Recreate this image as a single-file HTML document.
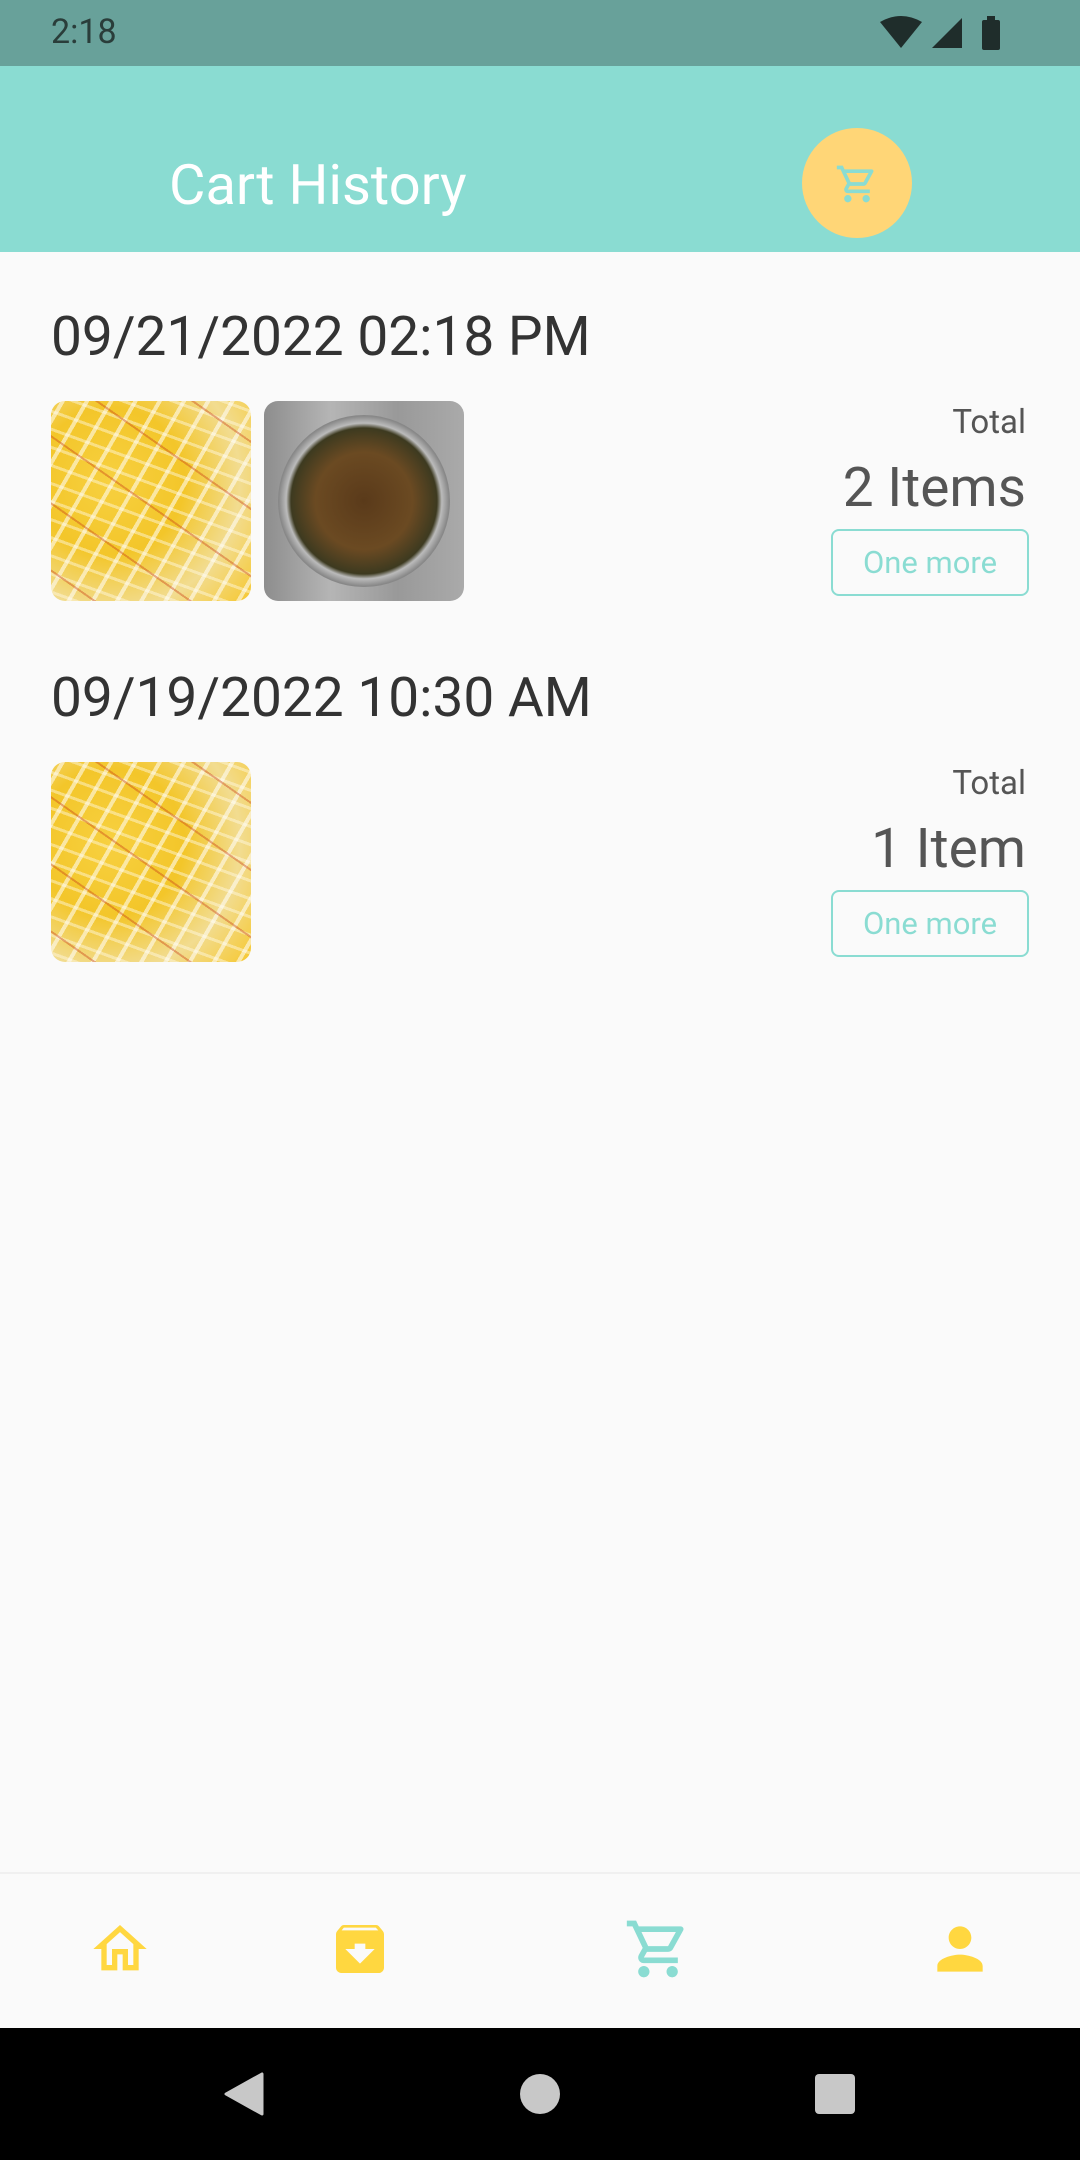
<!DOCTYPE html>
<html><head><meta charset="utf-8"><style>
body{margin:0;width:1080px;height:2160px;background:#fafafa;font-family:"Roboto","Liberation Sans",sans-serif;position:relative;overflow:hidden}
.a{position:absolute}
.date{left:51px;font-size:55px;color:#333;line-height:1;letter-spacing:0}
.img{width:200px;height:200px;border-radius:14px;overflow:hidden}
.rice{background:
 repeating-linear-gradient(35deg,transparent 0 24px,rgba(200,60,20,.4) 24px 26px,transparent 26px 55px),
 repeating-linear-gradient(-60deg,transparent 0 9px,rgba(255,255,255,.55) 9px 13px,transparent 13px 21px),
 repeating-linear-gradient(20deg,transparent 0 7px,rgba(255,250,230,.45) 7px 10px,transparent 10px 17px),
 radial-gradient(circle at 30% 40%,#f7d040,#f3c62a 40%,#f2dc90 70%,#f6c830)}
.fish{background:linear-gradient(90deg,#8d8d8d,#b5b5b5,#999,#aaa)}
.tot{right:54px;font-size:33px;color:#555;text-align:right;line-height:1}
.cnt{right:54px;font-size:55px;color:#555;text-align:right;line-height:1}
.btn{left:831px;width:194px;height:63px;border:2px solid #8adcd2;border-radius:8px;color:#8adcd2;font-size:31px;text-align:center;line-height:63px}
</style></head><body>
<div class="a" style="left:0;top:0;width:1080px;height:66px;background:#68a19a"></div>
<div class="a" style="left:51px;top:12px;font-size:34px;color:#2a3d3a">2:18</div>
<svg class="a" style="left:878px;top:14px" width="130" height="38" viewBox="0 0 130 38">
<path d="M2 8 Q23 -4 44 8 L23 34Z" fill="#1f2d2b"/><path d="M84 4 L84 34 L54 34Z" fill="#1f2d2b"/>
<rect x="104" y="6" width="18" height="30" rx="2" fill="#1f2d2b"/><rect x="109" y="2" width="8" height="5" fill="#1f2d2b"/></svg>
<div class="a" style="left:0;top:66px;width:1080px;height:186px;background:#8adcd2"></div>
<div class="a" style="left:169px;top:157px;font-size:56px;color:#fff;line-height:1">Cart History</div>
<div class="a" style="left:802px;top:128px;width:110px;height:110px;border-radius:50%;background:#ffd677"></div>
<svg class="a" style="left:835px;top:162px" width="44" height="44" viewBox="0 0 24 24"><path fill="#8adcd2" d="M15.55 13c.75 0 1.41-.41 1.75-1.03l3.58-6.490A.996.996 0 0020.01 4H5.21l-.94-2H1v2h2l3.6 7.59-1.35 2.44C4.52 15.37 5.48 17 7 17h12v-2H7l1.1-2h7.45zM6.16 6h12.15l-2.76 5H8.53L6.16 6zM7 18c-1.1 0-1.990.9-1.990 2S5.9 22 7 22s2-.9 2-2-.9-2-2-2zm10 0c-1.1 0-1.990.9-1.990 2s.89 2 1.990 2 2-.9 2-2-.9-2-2-2z"/></svg>

<div class="a date" style="top:310px">09/21/2022 02:18 PM</div>
<div class="a img rice" style="left:51px;top:401px"></div>
<div class="a img fish" style="left:264px;top:401px"><div style="position:absolute;left:14px;top:14px;width:172px;height:172px;border-radius:50%;background:radial-gradient(circle,#5a3a1a 0,#6b4a22 40%,#3d3a20 60%,#bbb 64%,#888 70%)"></div></div>
<div class="a tot" style="top:406px">Total</div>
<div class="a cnt" style="top:461px">2 Items</div>
<div class="a btn" style="top:529px">One more</div>

<div class="a date" style="top:671px">09/19/2022 10:30 AM</div>
<div class="a img rice" style="left:51px;top:762px"></div>
<div class="a tot" style="top:767px">Total</div>
<div class="a cnt" style="top:822px">1 Item</div>
<div class="a btn" style="top:890px">One more</div>

<div class="a" style="left:0;top:1872px;width:1080px;height:2px;background:#f0f0f0"></div>
<svg class="a" style="left:88px;top:1917px" width="64" height="64" viewBox="0 0 24 24"><path fill="#ffd740" d="M12 3L2 12h3v8h6v-6h2v6h6v-8h3L12 3zm5 15h-2v-6H9v6H7v-7.81l5-4.5 5 4.5V18z"/></svg>
<svg class="a" style="left:328px;top:1917px" width="64" height="64" viewBox="0 0 24 24"><path fill="#ffd740" d="M20.54 5.23l-1.39-1.68C18.88 3.21 18.47 3 18 3H6c-.47 0-.88.21-1.16.55L3.46 5.23C3.17 5.57 3 6.02 3 6.5V19c0 1.1.9 2 2 2h14c1.1 0 2-.9 2-2V6.5c0-.48-.17-.93-.46-1.27zM12 17.5L6.5 12H10v-2h4v2h3.5L12 17.5zM5.12 5l.81-1h12l.94 1H5.12z"/></svg>
<svg class="a" style="left:624px;top:1915px" width="68" height="68" viewBox="0 0 24 24"><path fill="#8adcd2" d="M15.55 13c.75 0 1.41-.41 1.75-1.03l3.58-6.49A.996.996 0 0020.01 4H5.21l-.94-2H1v2h2l3.6 7.59-1.35 2.44C4.52 15.37 5.48 17 7 17h12v-2H7l1.1-2h7.45zM6.16 6h12.15l-2.76 5H8.53L6.16 6zM7 18c-1.1 0-1.99.9-1.99 2S5.9 22 7 22s2-.9 2-2-.9-2-2-2zm10 0c-1.1 0-1.99.9-1.99 2s.89 2 1.99 2 2-.9 2-2-.9-2-2-2z"/></svg>
<svg class="a" style="left:926px;top:1915px" width="68" height="68" viewBox="0 0 24 24"><path fill="#ffd740" d="M12 12c2.21 0 4-1.79 4-4s-1.79-4-4-4-4 1.79-4 4 1.79 4 4 4zm0 2c-2.67 0-8 1.34-8 4v2h16v-2c0-2.66-5.33-4-8-4z"/></svg>

<div class="a" style="left:0;top:2028px;width:1080px;height:132px;background:#000"></div>
<svg class="a" style="left:222px;top:2072px" width="44" height="44" viewBox="0 0 44 44"><path d="M40 2 L40 42 L4 22Z" fill="#c8c8c8" stroke="#c8c8c8" stroke-width="3" stroke-linejoin="round"/></svg>
<div class="a" style="left:520px;top:2074px;width:40px;height:40px;border-radius:50%;background:#c8c8c8"></div>
<div class="a" style="left:815px;top:2074px;width:40px;height:40px;border-radius:4px;background:#c8c8c8"></div>
</body></html>
